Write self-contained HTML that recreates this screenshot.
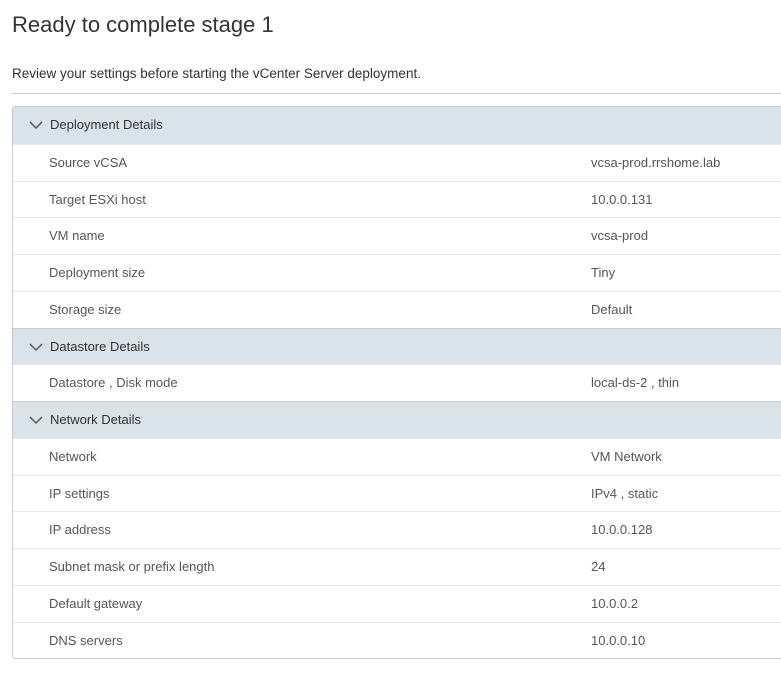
<!DOCTYPE html>
<html><head><style>
body{margin:0;background:#fff;font-family:"Liberation Sans",sans-serif;width:781px;height:685px;overflow:hidden;position:relative}
h1{position:absolute;left:12px;top:12px;margin:0;font-size:22px;font-weight:normal;color:#333}
.sub{position:absolute;left:12px;top:66px;font-size:13.5px;color:#333}
.line{position:absolute;left:12px;top:93px;width:769px;height:1px;background:#ccc}
.tbl{position:absolute;left:12px;top:106px;width:780px;border:1px solid #ccc;border-radius:3px;overflow:hidden}
.r{height:36.75px;box-sizing:border-box;border-top:1px solid #e8e8e8;position:relative;font-size:13px;color:#565656;line-height:35px}
.r:first-child{border-top:none}
.h{background:#dae3ea;color:#333;border-top:1px solid #ccc}
.r span{position:absolute;left:36px}
.r b{position:absolute;left:578px;font-weight:normal}
.h svg{position:absolute;left:16px;top:13px}
</style></head><body>
<h1>Ready to complete stage 1</h1>
<div class="sub">Review your settings before starting the vCenter Server deployment.</div>
<div class="line"></div>
<div class="tbl">
<div class="r h"><svg width="14" height="10"><path d="M1 2 L7 8 L13 2" fill="none" stroke="#555" stroke-width="1.5"/></svg><span style="left:37px">Deployment Details</span></div>
<div class="r"><span>Source vCSA</span><b>vcsa-prod.rrshome.lab</b></div>
<div class="r"><span>Target ESXi host</span><b>10.0.0.131</b></div>
<div class="r"><span>VM name</span><b>vcsa-prod</b></div>
<div class="r"><span>Deployment size</span><b>Tiny</b></div>
<div class="r"><span>Storage size</span><b>Default</b></div>
<div class="r h"><svg width="14" height="10"><path d="M1 2 L7 8 L13 2" fill="none" stroke="#555" stroke-width="1.5"/></svg><span style="left:37px">Datastore Details</span></div>
<div class="r"><span>Datastore , Disk mode</span><b>local-ds-2 , thin</b></div>
<div class="r h"><svg width="14" height="10"><path d="M1 2 L7 8 L13 2" fill="none" stroke="#555" stroke-width="1.5"/></svg><span style="left:37px">Network Details</span></div>
<div class="r"><span>Network</span><b>VM Network</b></div>
<div class="r"><span>IP settings</span><b>IPv4 , static</b></div>
<div class="r"><span>IP address</span><b>10.0.0.128</b></div>
<div class="r"><span>Subnet mask or prefix length</span><b>24</b></div>
<div class="r"><span>Default gateway</span><b>10.0.0.2</b></div>
<div class="r"><span>DNS servers</span><b>10.0.0.10</b></div>
</div>
</body></html>
